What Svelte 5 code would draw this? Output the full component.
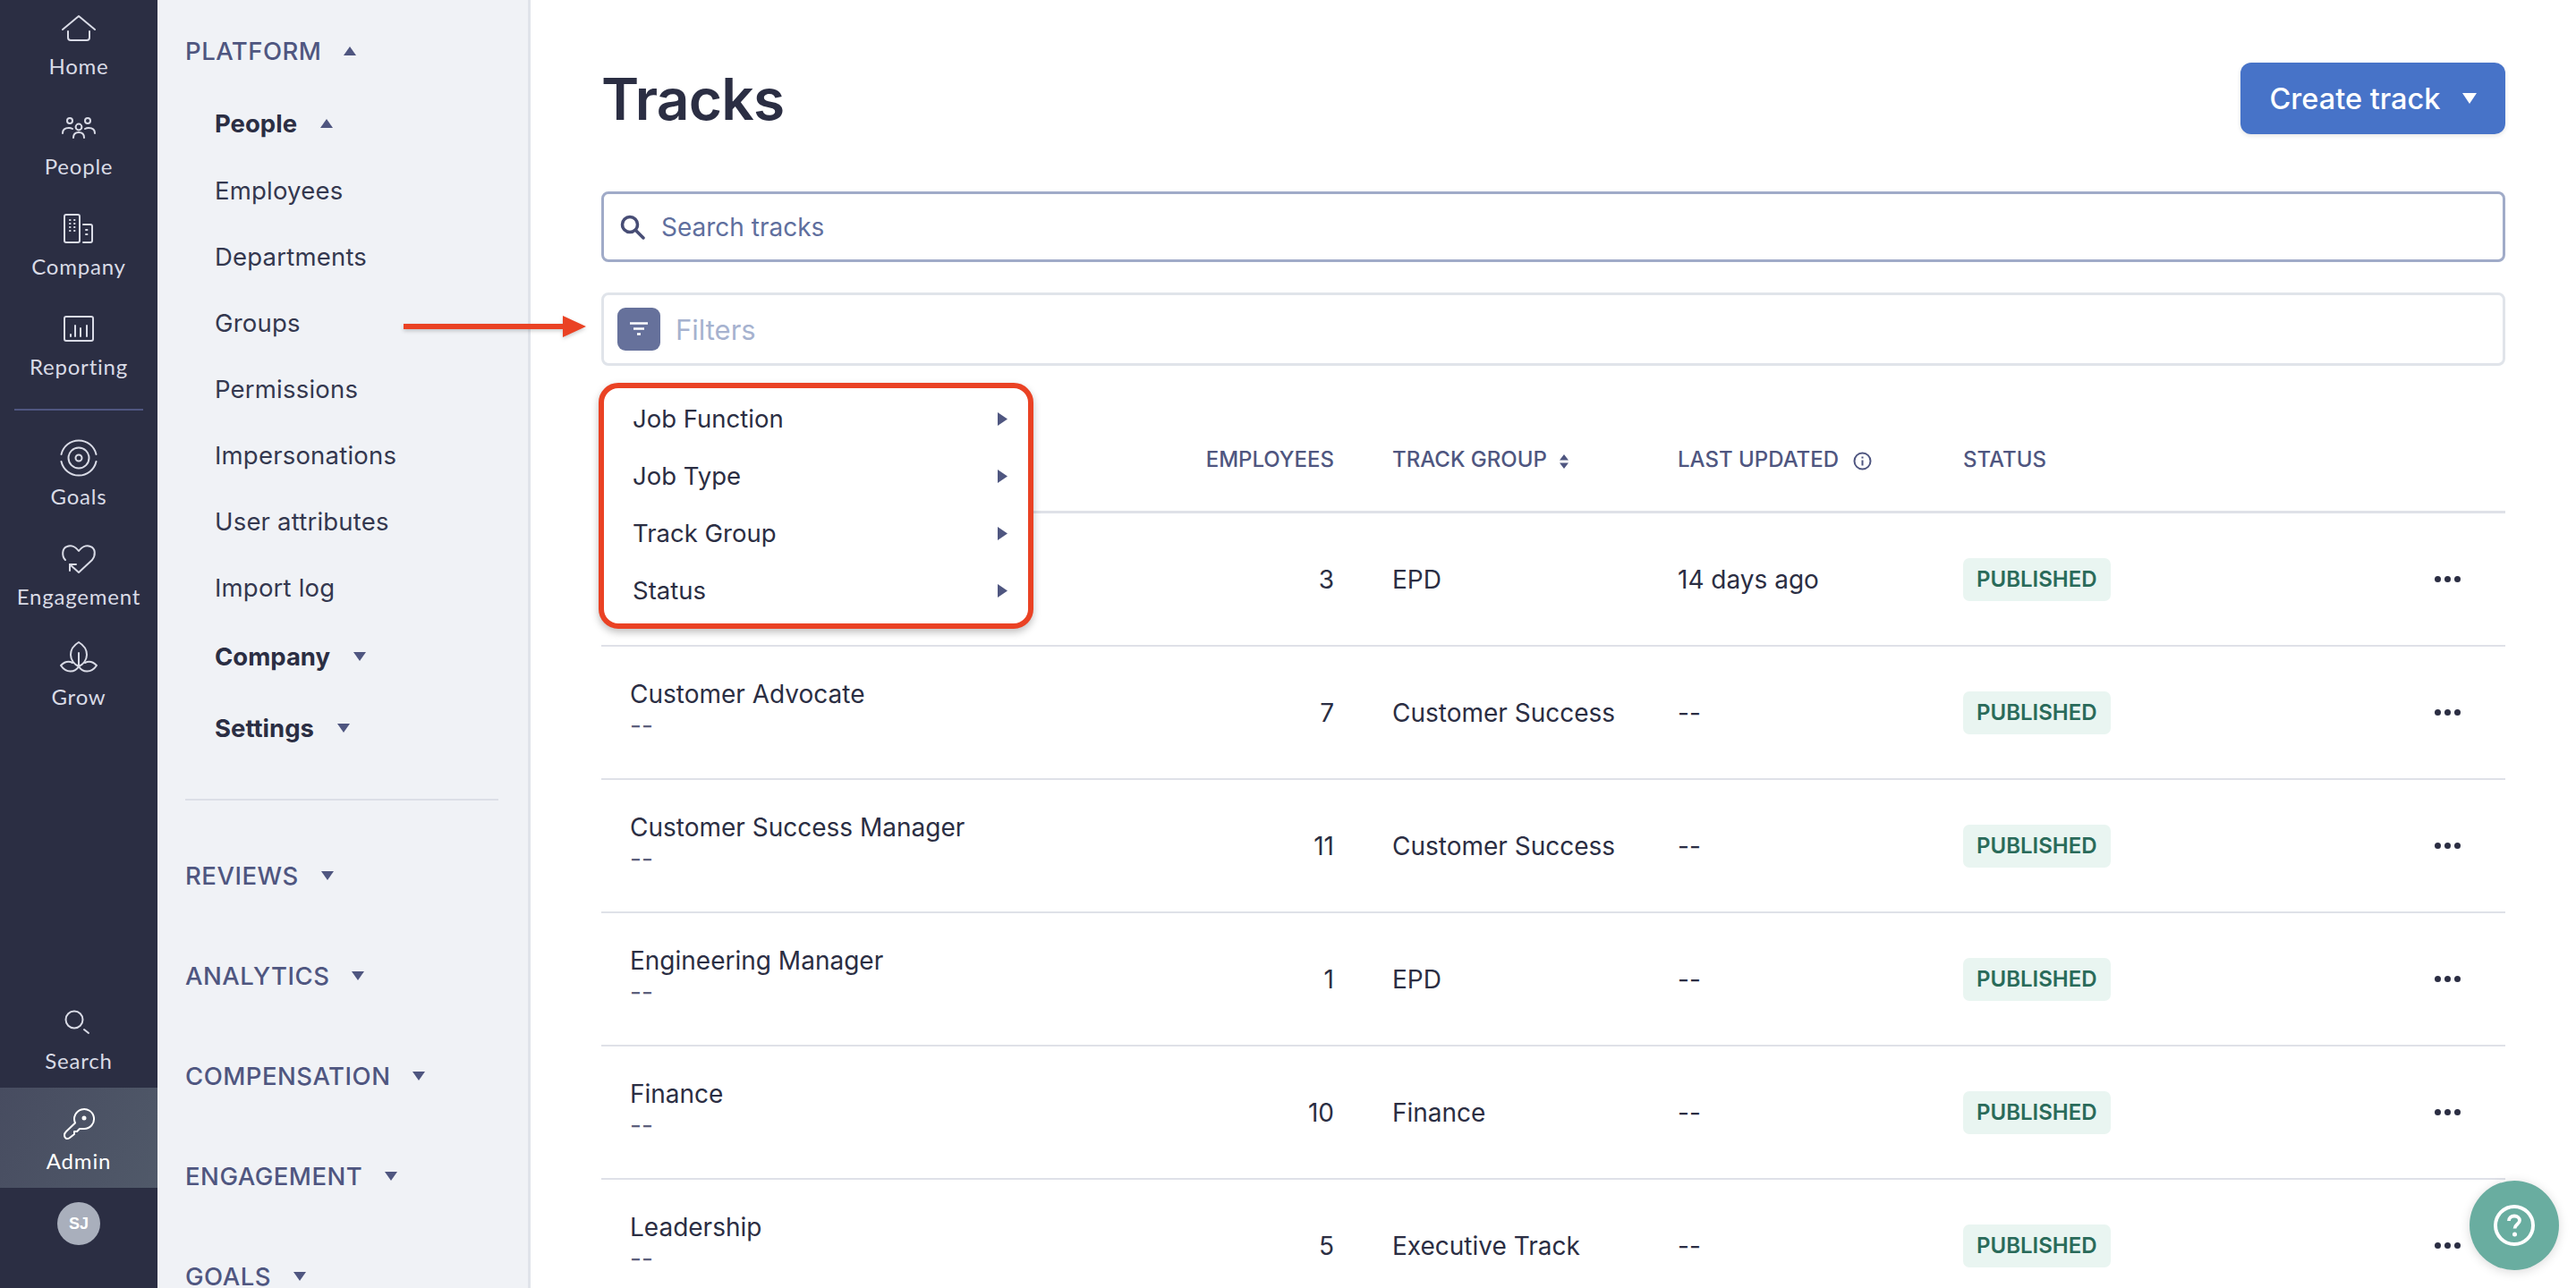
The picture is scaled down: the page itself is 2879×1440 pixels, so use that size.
<script lang="ts">
  const railTop = [
    { label: 'Home', icon: 'home' },
    { label: 'People', icon: 'people' },
    { label: 'Company', icon: 'company' },
    { label: 'Reporting', icon: 'reporting' }
  ];
  const railMid = [
    { label: 'Goals', icon: 'goals' },
    { label: 'Engagement', icon: 'engagement' },
    { label: 'Grow', icon: 'grow' }
  ];
  const peopleLinks = ['Employees', 'Departments', 'Groups', 'Permissions', 'Impersonations', 'User attributes', 'Import log'];
  const sections = ['REVIEWS', 'ANALYTICS', 'COMPENSATION', 'ENGAGEMENT', 'GOALS'];
  const filterOptions = ['Job Function', 'Job Type', 'Track Group', 'Status'];
  const tracks = [
    { name: '', sub: '', employees: 3, group: 'EPD', updated: '14 days ago' },
    { name: 'Customer Advocate', sub: '--', employees: 7, group: 'Customer Success', updated: '--' },
    { name: 'Customer Success Manager', sub: '--', employees: 11, group: 'Customer Success', updated: '--' },
    { name: 'Engineering Manager', sub: '--', employees: 1, group: 'EPD', updated: '--' },
    { name: 'Finance', sub: '--', employees: 10, group: 'Finance', updated: '--' },
    { name: 'Leadership', sub: '--', employees: 5, group: 'Executive Track', updated: '--' }
  ];
</script>

{#snippet railIcon(name)}
  <svg class="rail-icon" width="48" height="48" viewBox="0 0 48 48" fill="none" stroke="currentColor" stroke-width="2" stroke-linecap="round" stroke-linejoin="round">
    {#if name === 'home'}
      <path d="M6 26 24 11l18 15" /><path d="M12 28v7a3 3 0 0 0 3 3h18a3 3 0 0 0 3-3v-7" />
    {:else if name === 'people'}
      <circle cx="14" cy="16" r="3" /><circle cx="34" cy="16" r="3" /><circle cx="24" cy="23" r="3.4" />
      <path d="M6 30c0-4 3-6 7-6 1.500 0 3 .4 4 1" /><path d="M42 30c0-4-3-6-7-6-1.500 0-3 .4-4 1" /><path d="M18 35c0-4 2.500-6 6-6s6 2 6 6" />
    {:else if name === 'company'}
      <rect x="8" y="9" width="17" height="31" rx="2" /><path d="M29 20h8a2 2 0 0 1 2 2v16a2 2 0 0 1-2 2h-8" />
      <path d="M14 15h.5M19 15h.5M14 19h.5M19 19h.5M14 23h.5M19 23h.5M14 27h.5M19 27h.5M32 26h1.500M32 31h1.500" />
    {:else if name === 'reporting'}
      <rect x="8" y="11" width="32" height="27" rx="2" /><path d="M15 31v2M20 21v12M26 24v9M33 21v12" />
    {:else if name === 'goals'}
      <path d="M4.500 20A20 20 0 0 1 43.500 20M43.500 28A20 20 0 0 1 4.500 28" /><circle cx="24" cy="24" r="11.500" /><circle cx="24" cy="24" r="3.500" />
    {:else if name === 'engagement'}
      <path d="M9 26C5 22 5 13 11 11c5-2 10 1 13 5 3-4 8-7 13-5 6 2 6 10 2 15L24 40l-10-9" /><path d="M14 38v-7h7" />
    {:else if name === 'grow'}
      <path d="M24 6c-5 3-9 7-9 14 0 6 4 11 9 13 5-2 9-7 9-13 0-7-4-11-9-14z" /><path d="M24 18v15" />
      <path d="M24 33c-4 7-14 8-20-1 4-4 9-5 13-3" /><path d="M24 33c4 7 14 8 20-1-4-4-9-5-13-3" />
    {:else if name === 'search'}
      <circle cx="19" cy="21" r="9.500" /><path d="M30 32l5 4" />
    {:else if name === 'admin'}
      <path d="M20 24.500A11 11 0 1 1 30 31h-5l-3 3h-3v3l-5 4c-3 2-6 1-6-3 0-2 1-3 2-4z" /><circle cx="30" cy="19" r="1.500" fill="currentColor" />
    {/if}
  </svg>
{/snippet}

{#snippet caret(dir)}
  <svg class="caret" class:up={dir === 'up'} width="14" height="10" viewBox="0 0 14 10"><path d="M0 10 7 0l7 10z" /></svg>
{/snippet}

<div class="page">
  <nav class="rail">
    <div class="rail-group">
      {#each railTop as item}
        <div class="rail-item">
          {@render railIcon(item.icon)}
          <span>{item.label}</span>
        </div>
      {/each}
    </div>
    <div class="rail-divider"></div>
    <div>
      {#each railMid as item}
        <div class="rail-item">
          {@render railIcon(item.icon)}
          <span>{item.label}</span>
        </div>
      {/each}
    </div>
    <div class="rail-bottom">
      <div class="rail-item">
        {@render railIcon('search')}
        <span>Search</span>
      </div>
      <div class="rail-item active">
        {@render railIcon('admin')}
        <span>Admin</span>
      </div>
      <div class="avatar">SJ</div>
    </div>
  </nav>

  <aside class="sidebar">
    <div class="section-head first">PLATFORM {@render caret('up')}</div>
    <div class="link strong">People {@render caret('up')}</div>
    {#each peopleLinks as link}
      <div class="link">{link}</div>
    {/each}
    <div class="link strong company">Company {@render caret('down')}</div>
    <div class="link strong settings">Settings {@render caret('down')}</div>
    <div class="side-divider"></div>
    {#each sections as section}
      <div class="section-head">{section} {@render caret('down')}</div>
    {/each}
  </aside>

  <main class="main">
    <header class="head">
      <h1>Tracks</h1>
      <button class="create">Create track <svg width="16" height="12" viewBox="0 0 16 12"><path d="M0 0h16L8 12z" fill="#fff" /></svg></button>
    </header>

    <div class="search">
      <svg width="28" height="28" viewBox="0 0 28 28" fill="none" stroke="#474d75" stroke-width="3.500" stroke-linecap="round"><circle cx="11" cy="11" r="8.500" /><path d="M17.500 17.500 26 26" /></svg>
      <span>Search tracks</span>
    </div>

    <div class="filters">
      <div class="filter-btn">
        <svg width="22" height="16" viewBox="0 0 22 16" fill="none" stroke="#fff" stroke-width="2.600"><path d="M1 1.500h20M5 7.500h12M9 13.500h4" /></svg>
      </div>
      <span>Filters</span>
    </div>

    <div class="table">
      <div class="row header">
        <div></div>
        <div class="num">EMPLOYEES</div>
        <div class="group">TRACK GROUP
          <svg width="10" height="16" viewBox="0 0 10 16" fill="#4f5680"><path d="M0 6.500 5 0l5 6.500zM0 9.500h10L5 16z" /></svg>
        </div>
        <div>LAST UPDATED
          <svg class="info" width="21" height="21" viewBox="0 0 21 21" fill="none" stroke="#4f5680" stroke-width="2"><circle cx="10.500" cy="10.500" r="9" /><path d="M10.500 9.500v6M10.500 5.500v2" /></svg>
        </div>
        <div>STATUS</div>
        <div></div>
      </div>
      {#each tracks as track}
        <div class="row">
          <div class="name">
            <div>{track.name}</div>
            <div class="sub">{track.sub}</div>
          </div>
          <div class="num">{track.employees}</div>
          <div class="group">{track.group}</div>
          <div>{track.updated}</div>
          <div><span class="badge">PUBLISHED</span></div>
          <div class="dots"><i></i><i></i><i></i></div>
        </div>
      {/each}
    </div>

    <div class="filter-menu">
      {#each filterOptions as option}
        <div class="option">
          {option}
          <svg width="11" height="15" viewBox="0 0 11 15"><path d="M0 0l11 7.500L0 15z" fill="#4f5680" /></svg>
        </div>
      {/each}
    </div>
  </main>

  <svg class="arrow" width="210" height="24" viewBox="0 0 210 24">
    <path d="M0 9h178V0l26 12-26 12v-9H0z" fill="#ea4224" />
  </svg>

  <button class="help" aria-label="Help">
    <svg width="46" height="46" viewBox="0 0 46 46" fill="none" stroke="#fff" stroke-width="4"><circle cx="23" cy="23" r="21" /><path d="M17 18c0-3.500 2.500-5.500 6-5.500s6 2 6 5c0 4-5.500 4.500-5.500 9" stroke-width="3.800" /><circle cx="23.500" cy="33" r="2.500" fill="#fff" stroke="none" /></svg>
  </button>
</div>

<style>
  :global(body) {
    margin: 0;
    background: #fff;
  }

  .page {
    position: relative;
    display: flex;
    height: 1440px;
    overflow: hidden;
    font-family: Inter, 'Liberation Sans', sans-serif;
    color: #2b2e43;
  }

  .rail {
    width: 176px;
    flex-shrink: 0;
    display: flex;
    flex-direction: column;
    background: #2b2e43;
    color: #d9dbe6;
    font-family: Lato, 'Open Sans', sans-serif;
  }

  .rail-group { margin-top: -8px; }

  .rail-item {
    height: 112px;
    display: flex;
    flex-direction: column;
    align-items: center;
    justify-content: center;
    font-size: 24px;
    letter-spacing: 0.8px;
    line-height: 30px;
  }

  .rail-icon { margin-bottom: 4px; }

  .rail-item.active {
    background: linear-gradient(120deg, #474c60, #505969);
    color: #fff;
  }

  .rail-divider {
    height: 2px;
    margin: 17px 16px 14px;
    background: #4f5680;
  }

  .rail-bottom { margin-top: auto; }

  .avatar {
    width: 48px;
    height: 48px;
    margin: 16px auto 48px;
    border-radius: 50%;
    background: #a9afbc;
    color: #fff;
    font: 600 18px/48px 'Liberation Sans', sans-serif;
    text-align: center;
  }

  .sidebar {
    width: 414px;
    height: 1440px;
    flex-shrink: 0;
    padding-top: 13px;
    background: #f0f2f6;
    border-right: 3px solid #e0e3ea;
  }

  .section-head {
    height: 112px;
    display: flex;
    align-items: center;
    gap: 25px;
    padding-left: 31px;
    color: #4f5680;
    font-size: 27.5px;
    font-weight: 500;
    letter-spacing: 0.5px;
  }

  .section-head.first { height: 88px; }

  .link {
    height: 74px;
    display: flex;
    align-items: center;
    gap: 26px;
    padding-top: 1px;
    box-sizing: border-box;
    padding-left: 64px;
    font-size: 27.5px;
    color: #34384f;
    letter-spacing: 0.2px;
  }

  .link.strong {
    padding-top: 0;
    padding-bottom: 1px;
    font-weight: 700;
    color: #2b2e43;
    letter-spacing: 0;
  }

  .link.company { margin-top: 4px; }
  .link.settings { margin-top: 6px; }

  .side-divider {
    height: 2px;
    margin: 42px 33px 28px 31px;
    background: #dcdfe7;
  }

  .caret { fill: #4f5680; transform: rotate(180deg); }
  .caret.up { transform: none; }

  .main {
    position: relative;
    flex: 1;
    min-width: 0;
    padding: 70px 79px 0 79px;
  }

  .head {
    height: 80px;
    display: flex;
    align-items: center;
    justify-content: space-between;
  }

  h1 {
    margin: 0;
    font-size: 64px;
    font-weight: 600;
    letter-spacing: -0.8px;
  }

  .create {
    width: 296px;
    height: 80px;
    display: flex;
    align-items: center;
    justify-content: center;
    gap: 24px;
    border: 0;
    border-radius: 12px;
    background: #4773c8;
    color: #fff;
    font: 500 32.5px Inter, sans-serif;
    box-shadow: 0 2px 5px rgba(0, 0, 0, 0.1);
  }

  .search {
    height: 79px;
    box-sizing: border-box;
    margin-top: 64px;
    display: flex;
    align-items: center;
    gap: 18px;
    padding-left: 18px;
    border: 3px solid #a0abc8;
    border-radius: 8px;
    font-size: 28px;
    color: #5f6f9e;
  }

  .filters {
    height: 82px;
    box-sizing: border-box;
    margin-top: 34px;
    display: flex;
    align-items: center;
    gap: 17px;
    padding-left: 15px;
    border: 3px solid #e0e4ea;
    border-radius: 8px;
    font-size: 31px;
    color: #a6b2cf;
  }

  .filter-btn {
    width: 48px;
    height: 48px;
    display: flex;
    align-items: center;
    justify-content: center;
    border-radius: 9px;
    background: #66719b;
  }

  .table { margin-top: 47px; }

  .row {
    height: 149px;
    box-sizing: border-box;
    display: grid;
    grid-template-columns: 628px 191px 384px 319px 1fr 130px;
    align-items: center;
    border-bottom: 2px solid #dfe1e8;
    font-size: 28px;
    white-space: nowrap;
  }

  .row.header {
    height: 118px;
    border-bottom-width: 3px;
    color: #4f5680;
    font-size: 24px;
    font-weight: 500;
  }

  .num { text-align: right; }
  .group { padding-left: 65px; }
  .group svg { margin-left: 8px; vertical-align: -2px; }
  .info { margin-left: 10px; vertical-align: -4px; }

  .name {
    padding: 0 0 6px 32px;
    line-height: 35px;
  }

  .sub { color: #5b607c; }

  .badge {
    display: inline-block;
    height: 48px;
    padding: 0 15px;
    border-radius: 7px;
    background: #e9f5f1;
    color: #2a6b5a;
    font-size: 24px;
    font-weight: 600;
    line-height: 48px;
  }

  .dots {
    display: flex;
    justify-content: center;
    gap: 4px;
  }

  .dots i {
    width: 7px;
    height: 7px;
    border-radius: 50%;
    background: #2b2e43;
  }

  .filter-menu {
    position: absolute;
    left: 76px;
    top: 428px;
    width: 486px;
    height: 275px;
    box-sizing: border-box;
    padding: 2px 0;
    border: 6px solid #ea4224;
    border-radius: 22px;
    background: #fff;
    box-shadow: 0 4px 8px rgba(0, 0, 0, 0.25);
  }

  .option {
    height: 64px;
    display: flex;
    align-items: center;
    justify-content: space-between;
    padding: 0 23px 0 32px;
    font-size: 27.5px;
  }

  .arrow {
    position: absolute;
    left: 451px;
    top: 353px;
    filter: drop-shadow(0 2px 2px rgba(0, 0, 0, 0.2));
  }

  .help {
    position: absolute;
    left: 2760px;
    top: 1320px;
    width: 100px;
    height: 100px;
    display: flex;
    align-items: center;
    justify-content: center;
    padding: 0;
    border: 0;
    border-radius: 50%;
    background: #69ada0;
    box-shadow: 0 2px 12px rgba(0, 0, 0, 0.15);
  }
</style>
